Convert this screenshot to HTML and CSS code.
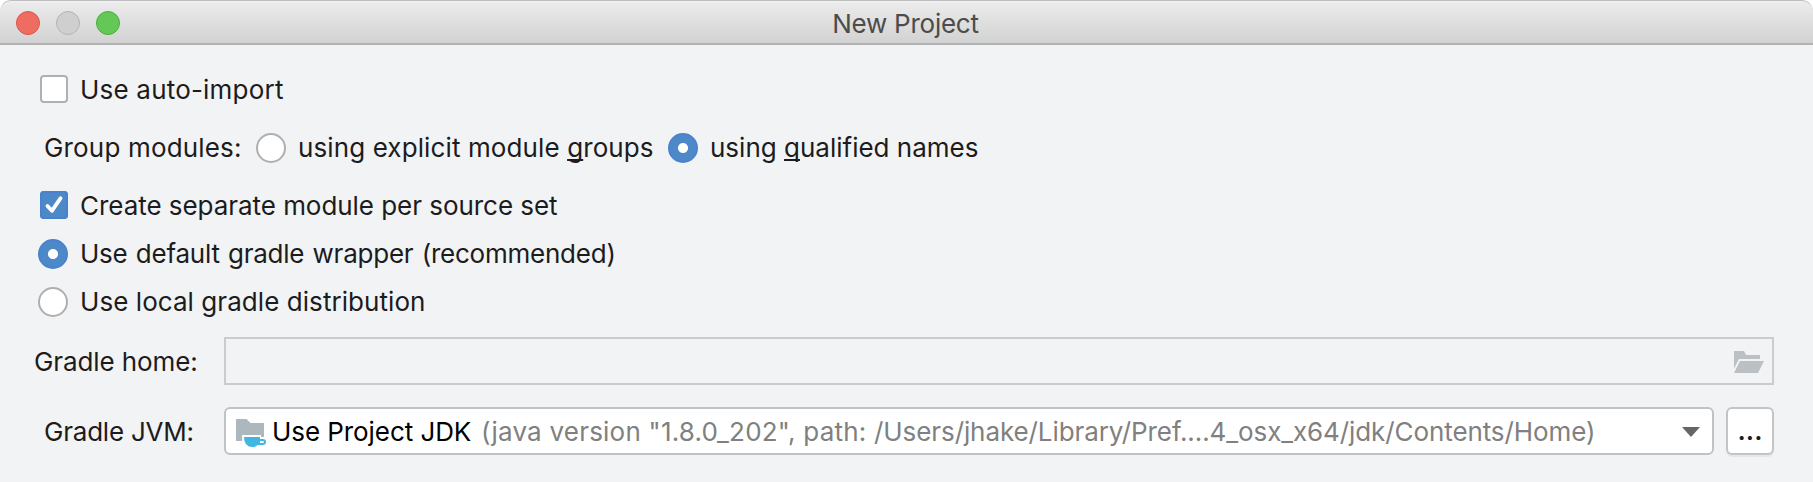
FILE: index.html
```html
<!DOCTYPE html>
<html lang="en">
<head>
<meta charset="utf-8">
<title>New Project</title>
<link rel="stylesheet" href="styles.css">
</head>
<body>
<div class="window">
  <header class="titlebar">
    <div class="lights"><span class="light red"></span><span class="light grey"></span><span class="light green"></span></div>
    <h1 class="title">New Project</h1>
  </header>
  <main class="content">
    <label class="row row-auto"><span class="checkbox"></span><span class="text t-auto">Use auto-import</span></label>
    <div class="row row-group">
      <span class="text t-group">Group modules:</span>
      <label class="option opt-explicit"><span class="radio"></span><span class="text t-explicit">using explicit module <u>g</u>roups</span></label>
      <label class="option opt-qualified"><span class="radio on"></span><span class="text t-qualified">using <u>q</u>ualified names</span></label>
    </div>
    <label class="row row-create"><span class="checkbox on"><svg class="check" viewBox="0 0 28 28"><path d="M7.5 15 L11.9 19.8 L20.6 7.2"/></svg></span><span class="text t-create">Create separate module per source set</span></label>
    <label class="row row-default"><span class="radio on"></span><span class="text t-default">Use default gradle wrapper (recommended)</span></label>
    <label class="row row-local"><span class="radio"></span><span class="text t-local">Use local gradle distribution</span></label>
    <div class="row row-home">
      <span class="text t-home">Gradle home:</span>
      <div class="field"><svg class="open-folder" viewBox="0 0 30 22"><path d="M0 0H10L12 4H26V8H5L0 17.5Z"/><path d="M6 10H30L24 22H0Z"/></svg></div>
    </div>
    <div class="row row-jvm">
      <span class="text t-jvm">Gradle JVM:</span>
      <div class="combo">
        <svg class="jdk" viewBox="0 0 30 28"><path class="folder" d="M0 0H10.5L14.5 4H28V18H25V16H6V22H0Z"/><path class="cup" d="M8 18H24V20H27Q30 20 30 23Q30 26 27 26H21.7Q19.5 28 16 28Q8 27.5 8 18ZM24 22V24H27Q28 24 28 23Q28 22 27 22Z"/></svg>
        <span class="text t-jdk">Use Project JDK</span>
        <span class="text t-path"><span class="version">(java version "1.8.0_202", path: </span>/Users/jhake/Library/Pref....4_osx_x64/jdk/Contents/Home)</span>
        <svg class="arrow" viewBox="0 0 18 10"><path d="M0 0H18L9 10Z"/></svg>
      </div>
      <button class="more">...</button>
    </div>
  </main>
</div>
</body>
</html>
```
FILE: styles.css
```css
* { box-sizing: border-box; }
body { margin: 0; background: #fff; font-family: Inter, "Liberation Sans", sans-serif; font-size: 26px; line-height: 30px; color: #1c1c1c; }
.window { width: 1813px; height: 482px; background: #f1f3f5; border-radius: 11px 11px 0 0; overflow: hidden; }
.titlebar { display: grid; grid-template-columns: 200px 1fr 200px; align-items: center; height: 45px; border-top: 1px solid #bdbcbe; border-bottom: 2px solid #b2b2b2; border-radius: 11px 11px 0 0; background: linear-gradient(#f3f3f3 0, #ebebeb 2px, #d2d2d2 100%); }
.lights { display: flex; gap: 16px; padding-left: 16px; padding-top: 2px; }
.light { width: 24px; height: 24px; border-radius: 50%; border: 1px solid; }
.red { background: #ee6c60; border-color: #dd5549; }
.grey { background: #cfcfcf; border-color: #b3b3b3; }
.green { background: #63c856; border-color: #4bac3e; }
.title { margin: 0; padding: 4px 2px 0 0; font-size: 26px; font-weight: 400; letter-spacing: -0.25px; color: #4c4c4c; text-align: center; }
.content { display: flex; flex-direction: column; align-items: flex-start; }
.row { display: flex; align-items: center; height: 30px; }
.text { white-space: pre; flex: none; }
.option { display: flex; align-items: center; }
.opt-explicit { gap: 12px; margin-right: 14px; }
.opt-qualified { gap: 12px; }
u { text-decoration-thickness: 2px; text-underline-offset: 2px; text-decoration-skip-ink: none; }
.checkbox { width: 28px; height: 28px; flex: none; border: 2px solid #b0b0b0; border-radius: 4px; background: #fff; }
.checkbox.on { border: 0; background: #4d89c9; box-shadow: inset 0 0 0 2px #4a83cb; }
.check { display: block; width: 28px; height: 28px; fill: none; stroke: #fff; stroke-width: 3.8; stroke-linecap: round; stroke-linejoin: round; }
.radio { width: 30px; height: 30px; flex: none; border: 2px solid #afafaf; border-radius: 50%; background: #fff; }
.radio.on { border-color: #4a83cb; background: radial-gradient(circle, #fff 4.6px, #4d89c9 5.4px); }
.row-auto { margin: 29px 0 0 40px; gap: 12px; }
.row-group { margin: 29px 0 0 44px; }
.row-create { margin: 27px 0 0 40px; gap: 12px; }
.row-default { margin: 19px 0 0 38px; gap: 12px; }
.row-local { margin: 18px 0 0 38px; gap: 12px; }
.row-home { margin: 20px 0 0 34px; height: 48px; }
.row-jvm { margin: 22px 0 0 44px; height: 48px; }
.t-auto, .t-create, .t-home, .t-jvm, .t-jdk, .t-path { padding-top: 2px; }
.t-auto { letter-spacing: 0.2px; }
.t-group { width: 212px; letter-spacing: 0.17px; }
.t-explicit { width: 356px; letter-spacing: 0.11px; }
.t-create { letter-spacing: -0.045px; }
.t-default { letter-spacing: -0.23px; word-spacing: 1.2px; }
.t-local { letter-spacing: 0.06px; }
.t-home { width: 190px; letter-spacing: -0.1px; }
.t-jvm { width: 180px; letter-spacing: -0.22px; }
.t-jdk { width: 209px; margin-left: 6px; letter-spacing: -0.07px; }
.t-path { color: #808080; letter-spacing: -0.095px; }
.version { letter-spacing: 0.22px; }
.field { width: 1550px; height: 48px; border: 2px solid #cbcccd; display: flex; align-items: center; justify-content: flex-end; padding: 2px 8px 0 0; }
.open-folder { width: 30px; height: 22px; fill: #bac0c4; }
.combo { width: 1490px; height: 48px; border: 2px solid #c2c2c2; border-radius: 6px; background: #fff; display: flex; align-items: center; padding-left: 10px; color: #000; }
.jdk { width: 30px; height: 28px; margin-top: 4px; flex: none; }
.folder { fill: #adb7be; }
.cup { fill: #40b6e0; fill-rule: evenodd; }
.arrow { width: 18px; height: 10px; fill: #666; margin: 2px 12px 0 auto; }
.more { width: 48px; height: 48px; margin-left: 12px; padding: 0; border: 2px solid #c4c4c4; border-radius: 6px; background: #fff; box-shadow: 0 2px #e6e7e9; font: 600 26px/30px Inter, "Liberation Sans", sans-serif; color: #1c1c1c; text-align: center; }
```
